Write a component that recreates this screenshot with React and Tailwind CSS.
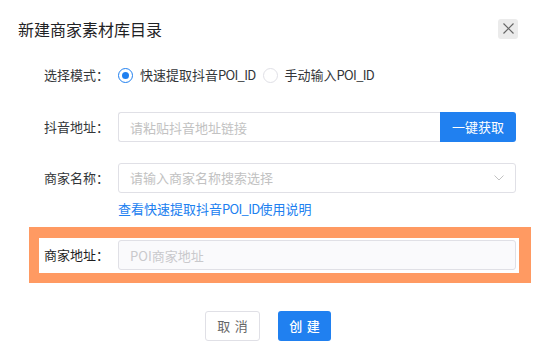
import React, { useState } from 'react';

const font = { fontFamily: '"Noto Sans CJK SC", "Noto Sans", sans-serif' };

const Poi = () => <span className="tracking-[-0.7px]">POI_ID</span>;

const Radio = ({ checked, children, onClick }) => (
  <button onClick={onClick} className="flex items-center gap-[7px]">
    <span
      className={
        'flex items-center justify-center w-[15px] h-[15px] rounded-full border ' +
        (checked ? 'border-[#2080f0]' : 'border-[#e0e0e6]')
      }
    >
      {checked && <span className="w-[7px] h-[7px] rounded-full bg-[#2080f0]" />}
    </span>
    <span className="text-[13px] leading-[20px] text-[#333639]">{children}</span>
  </button>
);

const Label = ({ children, dark }) => (
  <div
    className={
      'w-[100px] shrink-0 pr-[9px] text-right text-[13px] leading-[20px] ' +
      (dark ? 'text-[#1f1f1f]' : 'text-[#333639]')
    }
  >
    {children}
  </div>
);

const App = () => {
  const [mode, setMode] = useState('quick');

  return (
    <div className="w-[536px] h-[354px] bg-white flex flex-col" style={font}>
      {/* Header */}
      <div className="flex items-center justify-between h-[57px] pl-[18px] pr-[18px]">
        <h3 className="text-[16px] leading-[22px] text-[#1f2225] font-normal">新建商家素材库目录</h3>
        <button className="w-[20px] h-[20px] rounded-[3px] bg-[#ebebeb] flex items-center justify-center">
          <svg width="11" height="11" viewBox="0 0 11 11">
            <path d="M0.5 0.5 L10.5 10.5 M10.5 0.5 L0.5 10.5" stroke="#666" strokeWidth="1.2" />
          </svg>
        </button>
      </div>

      {/* Form */}
      <div className="pl-[18px] flex flex-col">
        <div className="flex items-center h-[30px] mt-[3px]">
          <Label>选择模式：</Label>
          <div className="flex items-center gap-[7px]">
            <Radio checked={mode === 'quick'} onClick={() => setMode('quick')}>
              快速提取抖音<Poi />
            </Radio>
            <Radio checked={mode === 'manual'} onClick={() => setMode('manual')}>
              手动输入<Poi />
            </Radio>
          </div>
        </div>

        <div className="flex items-center h-[30px] mt-[22px]">
          <Label>抖音地址：</Label>
          <div className="flex w-[398px] h-[30px]">
            <input
              className="flex-1 min-w-0 h-full border border-r-0 border-[#e0e0e6] rounded-l-[3px] pl-[11px] text-[13px] text-[#333639] placeholder:text-[#c2c2c2] outline-none"
              placeholder="请粘贴抖音地址链接"
            />
            <button className="w-[76px] h-full bg-[#2080f0] text-white text-[13px] rounded-r-[3px]">一键获取</button>
          </div>
        </div>

        <div className="flex items-center h-[30px] mt-[21px]">
          <Label>商家名称：</Label>
          <div className="flex items-center justify-between w-[398px] h-[30px] border border-[#e0e0e6] rounded-[3px] pl-[11px] pr-[11px]">
            <span className="text-[13px] text-[#c2c2c2]">请输入商家名称搜索选择</span>
            <svg width="10" height="6" viewBox="0 0 10 6">
              <path d="M0.5 0.5 L5 5 L9.5 0.5" fill="none" stroke="#c2c2c2" strokeWidth="1" />
            </svg>
          </div>
        </div>

        <div className="pl-[100px] mt-[6px] text-[13px] leading-[20px]">
          <a className="text-[#2080f0] cursor-pointer">
            查看快速提取抖音<Poi />使用说明
          </a>
        </div>
      </div>

      {/* Highlighted row */}
      <div className="ml-[29px] mt-[8px] w-[502px] border-[#ff9a62] border-l-[10px] border-r-[12px] border-t-[11px] border-b-[10px] bg-white">
        <div className="flex items-start h-[35px] pt-[2px] -ml-[21px]">
          <div className="h-[30px] flex items-center">
            <Label dark>商家地址：</Label>
          </div>
          <input
            disabled
            className="w-[398px] h-[30px] border border-[#e0e0e6] rounded-[3px] bg-[#fafafc] pl-[11px] text-[13px] placeholder:text-[#c9c9cc] outline-none"
            placeholder="POI商家地址"
          />
        </div>
      </div>

      {/* Footer */}
      <div className="flex justify-center gap-[18px] mt-[28px]">
        <button className="w-[55px] h-[30px] border border-[#e0e0e6] rounded-[3px] text-[13px] text-[#666]">
          <span className="tracking-[0.34em] -mr-[0.34em]">取消</span>
        </button>
        <button className="w-[53px] h-[30px] bg-[#2080f0] rounded-[3px] text-[13px] text-white font-medium">
          <span className="tracking-[0.34em] -mr-[0.34em]">创建</span>
        </button>
      </div>
    </div>
  );
};

export default App;
